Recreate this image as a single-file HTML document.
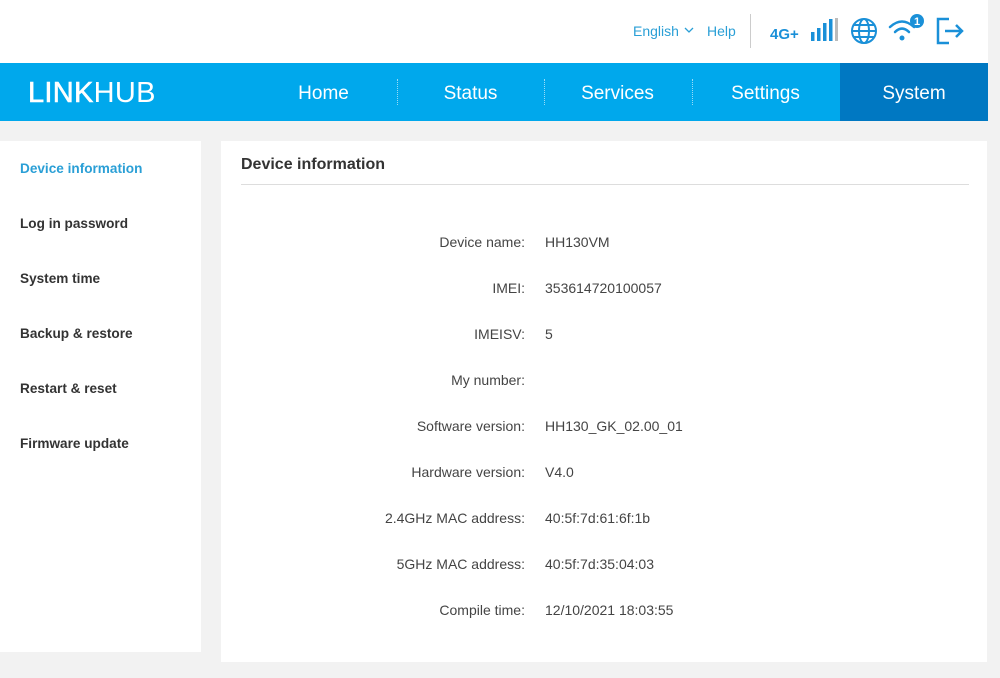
<!DOCTYPE html>
<html><head><style>
*{margin:0;padding:0;box-sizing:border-box}
body{width:1000px;height:678px;background:#f2f2f2;font-family:"Liberation Sans",Arial,sans-serif;position:relative;overflow:hidden}
.top{position:absolute;left:0;top:0;width:988px;height:63px;background:#fff}
.nav{position:absolute;left:0;top:63px;width:988px;height:58px;background:#00a8ec}
.logo{position:absolute;left:28px;top:14px;font-size:29px;color:#fff;letter-spacing:0.3px}
.tab{position:absolute;top:0;height:58px;line-height:62px;color:#fff;font-size:19px;text-align:center;width:147px}
.sep{position:absolute;top:16px;height:26px;border-left:1px dotted rgba(255,255,255,.6)}
.side{position:absolute;left:0;top:141px;width:201px;height:511px;background:#fff}
.side div{position:absolute;left:20px;font-size:13.6px;font-weight:bold;color:#333}
.main{position:absolute;left:221px;top:141px;width:766px;height:521px;background:#fff}
.main h1{position:absolute;left:20px;top:15px;font-size:16px;font-weight:bold;color:#333}
.hr{position:absolute;left:20px;top:43px;width:728px;border-top:1px solid #ddd}
.row{position:absolute;left:0;width:766px;font-size:14px;color:#444}
.row .l{position:absolute;right:462px;text-align:right;white-space:nowrap}
.row .v{position:absolute;left:324px;white-space:nowrap}
</style></head><body>
<div class="top">
<span style="position:absolute;left:633px;top:23px;font-size:14px;color:#2a9fd6">English</span>
<svg style="position:absolute;left:684px;top:27px" width="10" height="7"><path d="M1 1 L5 5 L9 1" stroke="#2a9fd6" fill="none" stroke-width="1.3"/></svg>
<span style="position:absolute;left:707px;top:23px;font-size:14px;color:#2a9fd6">Help</span>
<div style="position:absolute;left:750px;top:14px;height:34px;border-left:1px solid #ccc"></div>
<span style="position:absolute;left:770px;top:26px;font-size:15px;font-weight:bold;color:#1a90d8">4G+</span>
<svg style="position:absolute;left:810px;top:18px" width="30" height="24"><g fill="#1a90d8"><rect x="1" y="14" width="3.5" height="9"/><rect x="7" y="10" width="3.5" height="13"/><rect x="13" y="5" width="3.5" height="18"/><rect x="19" y="1" width="3.5" height="22"/></g><rect x="25" y="0" width="3" height="23" fill="#bbb"/></svg>
<svg style="position:absolute;left:850px;top:17px" width="28" height="28" fill="none" stroke="#1a90d8" stroke-width="2"><circle cx="14" cy="14" r="12"/><ellipse cx="14" cy="14" rx="5" ry="12"/><line x1="2" y1="14" x2="26" y2="14"/><path d="M4 8h20M4 20h20"/></svg>
<svg style="position:absolute;left:887px;top:13px" width="40" height="32"><g fill="none" stroke="#1a90d8" stroke-width="2.5" stroke-linecap="round"><path d="M3 14 Q15 3 27 14"/><path d="M8 19 Q15 12 22 19"/></g><circle cx="15" cy="25" r="2.5" fill="#1a90d8"/><circle cx="30" cy="8" r="7" fill="#1a90d8"/><text x="30" y="12" font-size="11" font-weight="bold" fill="#fff" text-anchor="middle" font-family="Liberation Sans">1</text></svg>
<svg style="position:absolute;left:936px;top:17px" width="30" height="28" fill="none" stroke="#1a90d8" stroke-width="2.5"><path d="M13 2H2V26H13"/><path d="M9 14H26M20 8L26 14L20 20"/></svg>
</div>
<div class="nav">
<div class="logo"><span style="-webkit-text-stroke:0.6px #fff">LINK</span>HUB</div>
<div class="tab" style="left:250px">Home</div>
<div class="sep" style="left:397px"></div>
<div class="tab" style="left:397px">Status</div>
<div class="sep" style="left:544px"></div>
<div class="tab" style="left:544px">Services</div>
<div class="sep" style="left:692px"></div>
<div class="tab" style="left:692px">Settings</div>
<div class="tab" style="left:840px;width:148px;background:#0078c2">System</div>
</div>
<div class="side">
<div style="top:20px;color:#2a9fd6">Device information</div>
<div style="top:75px">Log in password</div>
<div style="top:130px">System time</div>
<div style="top:185px">Backup &amp; restore</div>
<div style="top:240px">Restart &amp; reset</div>
<div style="top:295px">Firmware update</div>
</div>
<div class="main">
<h1>Device information</h1><div class="hr"></div>
<div class="row" style="top:93px"><span class="l">Device name:</span><span class="v">HH130VM</span></div>
<div class="row" style="top:139px"><span class="l">IMEI:</span><span class="v">353614720100057</span></div>
<div class="row" style="top:185px"><span class="l">IMEISV:</span><span class="v">5</span></div>
<div class="row" style="top:231px"><span class="l">My number:</span><span class="v"></span></div>
<div class="row" style="top:277px"><span class="l">Software version:</span><span class="v">HH130_GK_02.00_01</span></div>
<div class="row" style="top:323px"><span class="l">Hardware version:</span><span class="v">V4.0</span></div>
<div class="row" style="top:369px"><span class="l">2.4GHz MAC address:</span><span class="v">40:5f:7d:61:6f:1b</span></div>
<div class="row" style="top:415px"><span class="l">5GHz MAC address:</span><span class="v">40:5f:7d:35:04:03</span></div>
<div class="row" style="top:461px"><span class="l">Compile time:</span><span class="v">12/10/2021 18:03:55</span></div>
</div>
</body></html>
